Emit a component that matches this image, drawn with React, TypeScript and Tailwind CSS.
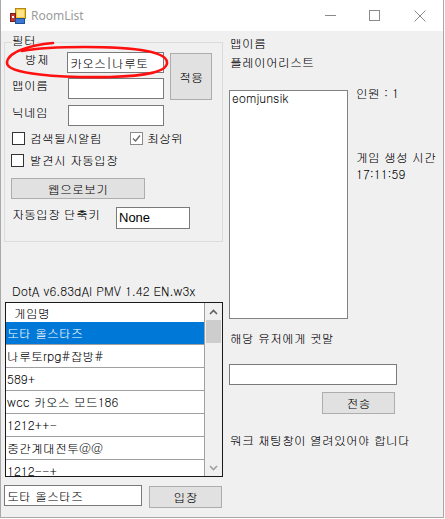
import React from "react";

const rooms = [
    "도타 올스타즈",
    "나루토rpg#잡방#",
    "589+",
    "wcc 카오스 모드186",
    "1212++-",
    "중간계대전투@@",
    "1212--+",
];

function TextBox({ value, className }: { value?: string; className: string }) {
    return (
        <div className={"flex items-center bg-white border border-[#7a7a7a] pl-[2px] text-black whitespace-nowrap overflow-hidden " + className}>
            {value}
        </div>
    );
}

function Button({ label, className }: { label: string; className: string }) {
    return (
        <div className={"flex items-center justify-center bg-[#e1e1e1] border border-[#adadad] text-black " + className}>
            {label}
        </div>
    );
}

function CheckBox({ checked }: { checked?: boolean }) {
    return (
        <div className={"w-[13px] h-[13px] bg-white border flex items-center justify-center " + (checked ? "border-[#8a8a8a]" : "border-[#333333]")}>
            {checked && (
                <svg width="9" height="9" viewBox="0 0 9 9">
                    <polyline points="1,4.5 3.5,7 8,1.5" fill="none" stroke="#6a6a6a" strokeWidth="1.4" />
                </svg>
            )}
        </div>
    );
}

function Chevron({ up }: { up?: boolean }) {
    return (
        <svg width="9" height="6" viewBox="0 0 9 6">
            <polyline
                points={up ? "1,5 4.5,1.5 8,5" : "1,1 4.5,4.5 8,1"}
                fill="none"
                stroke={up ? "#606060" : "#a0a0a0"}
                strokeWidth="1.6"
            />
        </svg>
    );
}

export default function App() {
    return (
        <div className="relative w-[445px] h-[519px] bg-white overflow-hidden font-['Gulim','Noto_Sans_CJK_KR',sans-serif] text-[12px] leading-[14px] text-black">
            <div className="w-[444px] h-[518px] border-l border-r border-b border-[#a9a9a9] flex flex-col">
                {/* Title bar */}
                <div className="h-[31px] bg-white flex items-center relative shrink-0">
                    <svg className="ml-[9px]" width="16" height="16" viewBox="0 0 16 16">
                        <rect x="5.5" y="0.5" width="10" height="10" fill="#f7c531" stroke="#b08a1a" />
                        <rect x="7" y="2" width="7" height="7" fill="#fde48a" />
                        <rect x="0.5" y="5.5" width="5" height="8" fill="#c8332b" stroke="#7a1f1a" />
                        <rect x="5.5" y="10.5" width="9" height="5" fill="#3a78d4" stroke="#1f4f99" />
                        <rect x="2" y="8" width="2" height="2" fill="#ffffff" />
                    </svg>
                    <span className="ml-[5px] font-['Noto_Sans',sans-serif] text-[12px] text-[#9b9b9b]">RoomList</span>
                    <div className="ml-auto flex items-center">
                        <svg className="mr-[33px]" width="11" height="11" viewBox="0 0 11 11">
                            <line x1="0" y1="5.5" x2="11" y2="5.5" stroke="#8a8a8a" strokeWidth="1" />
                        </svg>
                        <svg className="mr-[34px]" width="11" height="11" viewBox="0 0 11 11">
                            <rect x="0.5" y="0.5" width="10" height="10" fill="none" stroke="#8a8a8a" />
                        </svg>
                        <svg className="mr-[17px]" width="12" height="12" viewBox="0 0 12 12">
                            <line x1="0.5" y1="0.5" x2="11.5" y2="11.5" stroke="#8a8a8a" />
                            <line x1="11.5" y1="0.5" x2="0.5" y2="11.5" stroke="#8a8a8a" />
                        </svg>
                    </div>
                </div>

                {/* Body */}
                <div className="flex-1 bg-[#f0f0f0] flex pl-[3px]">
                    {/* Left column */}
                    <div className="w-[222px] flex flex-col">
                        <div className="relative mt-[11px] w-[219px] h-[200px] border border-[#dcdcdc]">
                            <span className="absolute left-[7px] -top-[10px] bg-[#f0f0f0] pr-[1px]">필터</span>
                            <div className="flex pt-[9px]">
                                <div className="flex flex-col">
                                    <div className="flex items-start">
                                        <span className="w-[62px] pl-[20px]">방제</span>
                                        <TextBox value="카오스|나루토" className="w-[97px] h-[21px]" />
                                    </div>
                                    <div className="flex items-start mt-[5px]">
                                        <span className="w-[63px] pl-[7px]">맵이름</span>
                                        <TextBox className="w-[96px] h-[21px]" />
                                    </div>
                                    <div className="flex items-start mt-[6px]">
                                        <span className="w-[63px] pl-[7px]">닉네임</span>
                                        <TextBox className="w-[96px] h-[21px]" />
                                    </div>
                                </div>
                                <Button label="적용" className="ml-[6px] mt-[1px] w-[42px] h-[47px]" />
                            </div>
                            <div className="flex items-center mt-[5px] pl-[7px]">
                                <div className="w-[118px] flex items-center">
                                    <CheckBox />
                                    <span className="ml-[5px]">검색될시알림</span>
                                </div>
                                <CheckBox checked />
                                <span className="ml-[4px]">최상위</span>
                            </div>
                            <div className="flex items-center mt-[8px] pl-[6px]">
                                <CheckBox />
                                <span className="ml-[6px]">발견시 자동입장</span>
                            </div>
                            <Button label="웹으로보기" className="mt-[11px] ml-[6px] w-[134px] h-[21px]" />
                            <div className="flex items-start mt-[8px]">
                                <span className="w-[111px] pl-[7px]">자동입장 단축키</span>
                                <TextBox value="None" className="w-[74px] h-[22px] font-['Liberation_Sans',sans-serif] text-[13px]" />
                            </div>
                        </div>

                        <div className="mt-[42px] pl-[8px]">DotA v6.83dAI PMV 1.42 EN.w3x</div>

                        <div className="mt-[4px] ml-[1px] w-[218px] h-[175px] border border-[#1a1a1a] flex bg-white">
                            <div className="w-[199px] border-r border-[#a0a0a0] flex flex-col overflow-hidden">
                                <div className="h-[19px] shrink-0 flex items-center pl-[8px] bg-white">게임명</div>
                                {rooms.map((r, i) => (
                                    <div
                                        key={r}
                                        className={
                                            "h-[23px] shrink-0 flex items-center pl-[1px] border-b border-[#a0a0a0] whitespace-nowrap " +
                                            (i === 0 ? "bg-[#0078d7] text-white" : "bg-white")
                                        }
                                    >
                                        {r}
                                    </div>
                                ))}
                            </div>
                            <div className="w-[17px] bg-[#f0f0f0] flex flex-col">
                                <div className="h-[17px] flex items-center justify-center">
                                    <Chevron up />
                                </div>
                                <div className="mx-[1px] h-[23px] bg-[#cdcdcd]" />
                                <div className="flex-1" />
                                <div className="h-[17px] flex items-center justify-center">
                                    <Chevron />
                                </div>
                            </div>
                        </div>

                        <div className="flex items-start mt-[8px]">
                            <TextBox value="도타 올스타즈" className="w-[138px] h-[21px] pl-[2px]" />
                            <Button label="입장" className="ml-[7px] mt-[1px] w-[73px] h-[22px]" />
                        </div>
                    </div>

                    {/* Right column */}
                    <div className="ml-[3px] flex flex-col">
                        <div className="mt-[5px] pl-[1px]">맵이름</div>
                        <div className="mt-[5px] pl-[1px]">플레이어리스트</div>
                        <div className="flex mt-[21px]">
                            <div className="w-[119px] h-[229px] bg-white border border-[#828282] pl-[2px]">eomjunsik</div>
                            <div className="ml-[8px] flex flex-col">
                                <span className="-mt-[4px]">인원 : 1</span>
                                <span className="mt-[50px]">게임 생성 시간</span>
                                <span className="mt-[3px]">17:11:59</span>
                            </div>
                        </div>
                        <div className="mt-[12px] pl-[1px]">해당 유저에게 귓말</div>
                        <TextBox className="mt-[19px] w-[168px] h-[21px]" />
                        <Button label="전송" className="mt-[7px] ml-[93px] w-[73px] h-[22px]" />
                        <div className="mt-[19px] pl-[1px]">워크 채팅창이 열려있어야 합니다</div>
                    </div>
                </div>
            </div>

            {/* red marker annotation */}
            <svg className="absolute inset-0 pointer-events-none" width="445" height="519" viewBox="0 0 445 519">
                <path
                    d="M 53 43 C 30 45, 7 52, 7 63 C 7 74, 60 78, 110 77 C 145 76, 168 72, 167 62 C 166 50, 125 47, 85 47 C 60 47, 38 48, 22 51"
                    fill="none"
                    stroke="#ff1010"
                    strokeWidth="2.6"
                    strokeLinecap="round"
                />
            </svg>
        </div>
    );
}
